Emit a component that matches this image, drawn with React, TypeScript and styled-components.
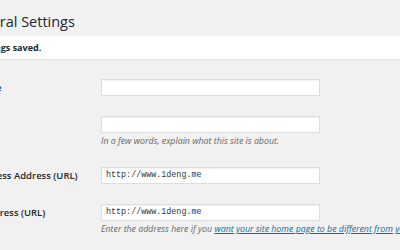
import styled, { createGlobalStyle } from 'styled-components';

const GlobalStyle = createGlobalStyle`
  html, body {
    margin: 0;
    padding: 0;
    background: #f1f1f1;
    overflow: hidden;
  }
  body {
    width: 400px;
    height: 250px;
    font-family: 'Open Sans', 'DejaVu Sans', sans-serif;
    color: #23282d;
  }
`;

const Wrap = styled.div`
  margin-left: -38px;
  padding-top: 12px;
  width: 600px;
`;

const Heading = styled.h1`
  margin: 0 0 0 2px;
  font-size: 14.5px;
  font-weight: 400;
  line-height: 20px;
  color: #23282d;
`;

const Notice = styled.div`
  margin-top: 4px;
  background: #fff;
  border-left: 3px solid #46b450;
  box-shadow: 0 1px 1px rgba(0, 0, 0, 0.06);
  padding: 0 9px;
  height: 23px;
  line-height: 23px;
  font-size: 9px;
  font-weight: 700;
`;

const FormTable = styled.div`
  margin-top: 10px;
  display: flex;
  flex-direction: column;
`;

const Row = styled.div`
  display: grid;
  grid-template-columns: 139px 1fr;
  padding: 10px 0;
`;

const Label = styled.label`
  font-size: 9.5px;
  font-weight: 600;
  line-height: 17px;
  white-space: nowrap;
`;

const Field = styled.div`
  display: flex;
  flex-direction: column;
`;

const Input = styled.div<{ mono?: boolean }>`
  box-sizing: border-box;
  width: 219px;
  height: 17px;
  background: #fff;
  border: 1px solid #ddd;
  box-shadow: inset 0 1px 1px rgba(0, 0, 0, 0.05);
  padding: 0 4px;
  font-family: ${(p) => (p.mono ? "'Liberation Mono', 'DejaVu Sans Mono', monospace" : 'inherit')};
  font-size: 8.4px;
  line-height: 15px;
  color: #32373c;
`;

const Description = styled.p`
  margin: 3px 0 0;
  font-size: 8.8px;
  font-style: italic;
  line-height: 11px;
  color: #666;
  white-space: nowrap;
  a {
    color: #0073aa;
  }
`;

export default function App() {
  return (
    <>
      <GlobalStyle />
      <Wrap>
        <Heading>General Settings</Heading>
        <Notice>Settings saved.</Notice>
        <FormTable>
          <Row>
            <Label>Site Title</Label>
            <Field>
              <Input />
            </Field>
          </Row>
          <Row>
            <Label>Tagline</Label>
            <Field>
              <Input />
              <Description>In a few words, explain what this site is about.</Description>
            </Field>
          </Row>
          <Row>
            <Label>WordPress Address (URL)</Label>
            <Field>
              <Input mono>http://www.1deng.me</Input>
            </Field>
          </Row>
          <Row>
            <Label>Site Address (URL)</Label>
            <Field>
              <Input mono>http://www.1deng.me</Input>
              <Description>
                Enter the address here if you{' '}
                <a href="#">want your site home page to be different from your WordPress installation directory</a>.
              </Description>
            </Field>
          </Row>
        </FormTable>
      </Wrap>
    </>
  );
}
